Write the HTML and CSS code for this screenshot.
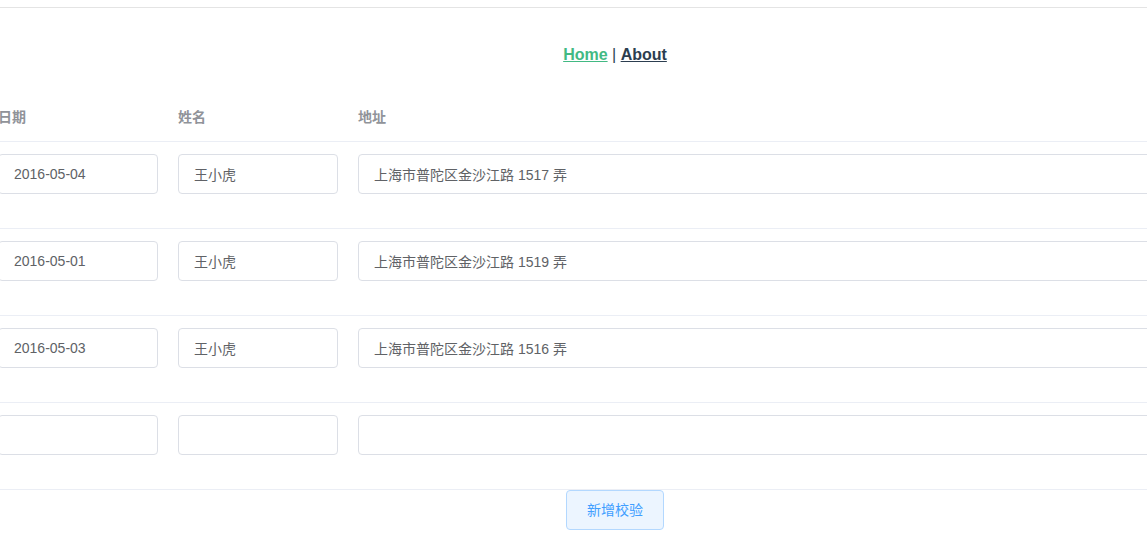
FILE: index.html
```html
<!DOCTYPE html>
<html lang="zh-CN">
<head>
  <meta charset="UTF-8" />
  <meta name="viewport" content="width=device-width, initial-scale=1.0"/>
  <title>动态表单校验</title>
  <link rel="stylesheet" href="styles.css">
</head>
<body>
  <div class="top-rule"></div>
  <div id="app">
    <div id="nav">
      <a href="#/" class="router-link-exact-active">Home</a> |
      <a href="#/about">About</a>
    </div>

    <form class="table-form">
      <table class="data-table">
        <thead>
          <tr>
            <th class="col-date"><div class="cell">日期</div></th>
            <th class="col-name"><div class="cell">姓名</div></th>
            <th><div class="cell">地址</div></th>
          </tr>
        </thead>
        <tbody>
          <tr>
            <td><div class="cell"><div class="form-item"><input class="text-input" type="text" value="2016-05-04"></div></div></td>
            <td><div class="cell"><div class="form-item"><input class="text-input" type="text" value="王小虎"></div></div></td>
            <td><div class="cell"><div class="form-item"><input class="text-input" type="text" value="上海市普陀区金沙江路 1517 弄"></div></div></td>
          </tr>
          <tr>
            <td><div class="cell"><div class="form-item"><input class="text-input" type="text" value="2016-05-01"></div></div></td>
            <td><div class="cell"><div class="form-item"><input class="text-input" type="text" value="王小虎"></div></div></td>
            <td><div class="cell"><div class="form-item"><input class="text-input" type="text" value="上海市普陀区金沙江路 1519 弄"></div></div></td>
          </tr>
          <tr>
            <td><div class="cell"><div class="form-item"><input class="text-input" type="text" value="2016-05-03"></div></div></td>
            <td><div class="cell"><div class="form-item"><input class="text-input" type="text" value="王小虎"></div></div></td>
            <td><div class="cell"><div class="form-item"><input class="text-input" type="text" value="上海市普陀区金沙江路 1516 弄"></div></div></td>
          </tr>
          <tr>
            <td><div class="cell"><div class="form-item"><input class="text-input" type="text" value=""></div></div></td>
            <td><div class="cell"><div class="form-item"><input class="text-input" type="text" value=""></div></div></td>
            <td><div class="cell"><div class="form-item"><input class="text-input" type="text" value=""></div></div></td>
          </tr>
        </tbody>
      </table>
      <div class="form-actions">
        <button type="button" class="add-btn">新增校验</button>
      </div>
    </form>
  </div>
</body>
</html>
```

FILE: styles.css
```css
body {
  margin: 0;
  background: #fff;
  overflow: hidden;
  font-family: "Liberation Sans", "Noto Sans CJK SC", Arial, sans-serif;
}
.top-rule {
  height: 7px;
  border-bottom: 1px solid #e4e4e4;
}
#app {
  width: 1254px;
  margin-left: -12px;
  color: #2c3e50;
}
#nav {
  padding: 38px 0 30px 0;
  text-align: center;
  font-size: 16px;
  line-height: 18px;
}
#nav a {
  color: #2c3e50;
  font-weight: 700;
}
#nav a.router-link-exact-active { color: #42b983; }

.data-table {
  width: 100%;
  border-collapse: collapse;
  table-layout: fixed;
  font-size: 14px;
}
.col-date, .col-name { width: 180px; }
.data-table th {
  padding: 12px 0;
  text-align: left;
  color: #909399;
  font-weight: 700;
  border-bottom: 1px solid #ebeef5;
}
.data-table td {
  padding: 12px 0;
  border-bottom: 1px solid #ebeef5;
}
.cell {
  padding: 0 10px;
  line-height: 23px;
}
.form-item { margin-bottom: 22px; }
.text-input {
  display: block;
  box-sizing: border-box;
  width: 100%;
  height: 40px;
  padding: 0 15px;
  border: 1px solid #dcdfe6;
  border-radius: 4px;
  font-family: inherit;
  font-size: 14px;
  color: #606266;
  background: #fff;
  outline: none;
}
.form-actions {
  display: flex;
  justify-content: center;
}
.add-btn {
  padding: 12px 20px;
  font-family: inherit;
  font-size: 14px;
  line-height: 14px;
  color: #409eff;
  background: #ecf5ff;
  border: 1px solid #b3d8ff;
  border-radius: 4px;
  cursor: pointer;
}
```
